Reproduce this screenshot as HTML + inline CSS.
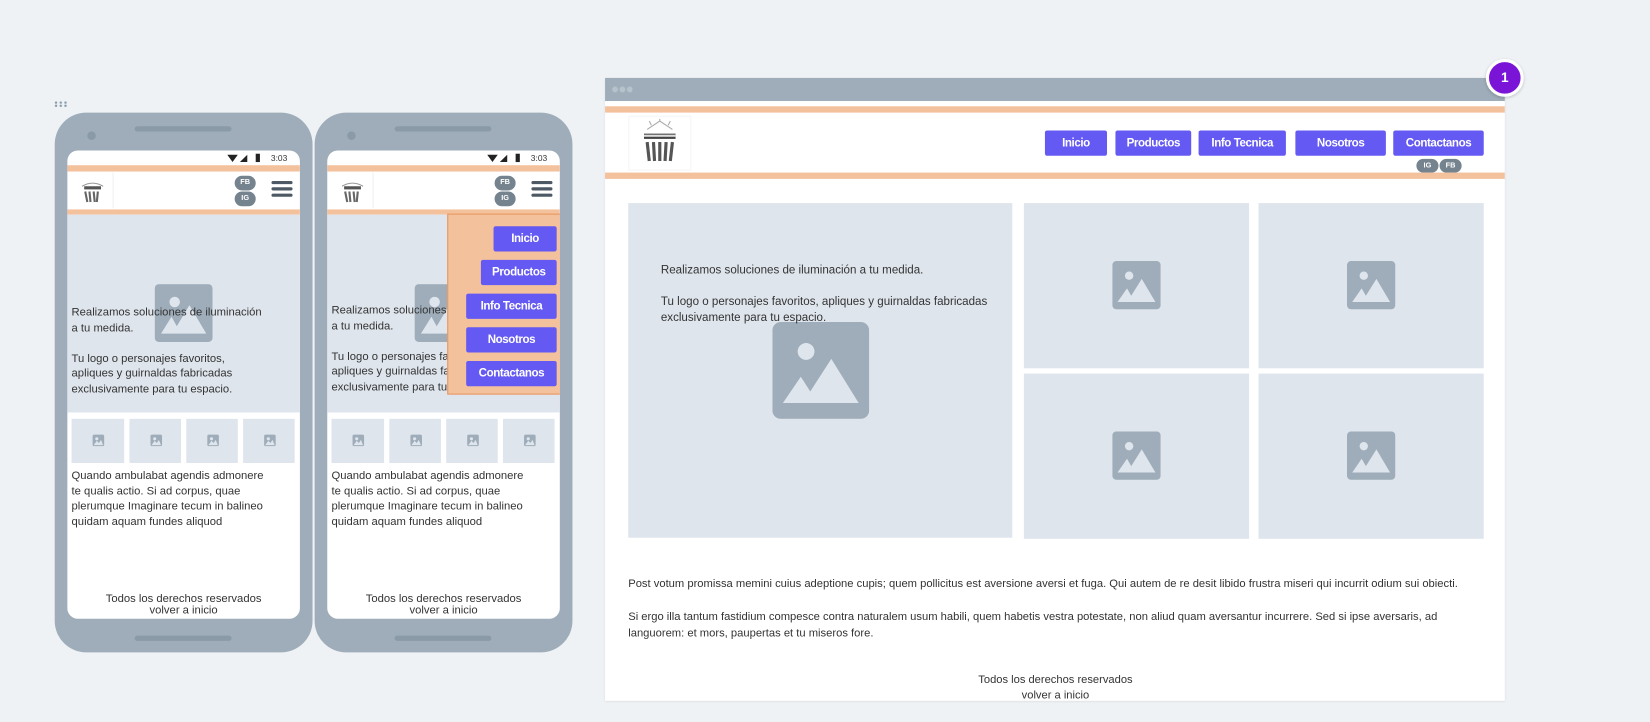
<!DOCTYPE html>
<html><head><meta charset="utf-8"><style>
*{margin:0;padding:0;box-sizing:border-box}
html,body{width:1650px;height:722px;overflow:hidden;background:#eef2f5}
#s{position:absolute;left:0;top:0;width:1568px;height:686px;transform:scale(1.05230);transform-origin:0 0;font-family:"Liberation Sans",sans-serif;color:#333}
.a{position:absolute}
.ph{background:#9eadb9;border-radius:30px;width:245px;height:513px;top:107px}
.scr{background:#fff;border-radius:10px;left:12px;top:36px;width:221px;height:445px;overflow:hidden}
.spk{left:76px;top:13px;width:92px;height:5px;border-radius:3px;background:#8a9aa7}
.cam{left:31px;top:18px;width:8px;height:8px;border-radius:50%;background:#8a9aa7}
.bot{left:76px;top:497px;width:92px;height:5px;border-radius:3px;background:#8a9aa7}
.or{background:#f4c19d}
.pl{background:#dfe5ed}
.btn{background:#6459f2;color:#fff;font-size:11px;font-weight:bold;text-align:center;border-radius:2px;letter-spacing:-.4px}
.bd{background:#75838f;color:#fff;font-size:7px;font-weight:bold;text-align:center;border-radius:8px}
.t{font-size:10.7px;line-height:14.5px;white-space:nowrap}
</style></head><body><div id="s">
<div class="a" style="left:51px;top:96px;width:14px;height:6px;background:radial-gradient(circle,#8a9aa7 1px,transparent 1.3px) 0 0/4.5px 3px"></div>

<!-- phone 1 -->
<div class="a ph" style="left:52px">
 <div class="a spk"></div><div class="a cam"></div><div class="a bot"></div>
 <div class="a scr">
  <svg class="a" style="left:152px;top:3px" width="35" height="9"><path d="M0 1 L10 1 L5 8Z" fill="#222"/><path d="M12 8 L19 8 L19 1Z" fill="#222"/><rect x="27" y="0" width="4" height="8" fill="#222"/></svg>
  <div class="a" style="right:12px;top:3px;font-size:8px">3:03</div>
  <div class="a or" style="left:0;top:14px;width:221px;height:6px"></div>
  <div class="a" style="left:4px;top:21px;width:40px;height:34px;border-right:1px solid #f0f0f0"></div>
  <svg class="a" style="left:12px;top:26px" width="24" height="26"><path d="M2 8 Q12 2 22 8" stroke="#999" fill="none"/><rect x="4" y="8" width="16" height="3" fill="#555"/><path d="M5 13 l2 10 M9 13 l1 10 M13 13 l1 10 M17 13 l-1 10" stroke="#666" stroke-width="2"/></svg>
  <div class="a bd" style="left:159px;top:24px;width:20px;height:14px;line-height:14px">FB</div>
  <div class="a bd" style="left:159px;top:39px;width:20px;height:14px;line-height:14px">IG</div>
  <div class="a" style="left:194px;top:29px;width:20px;height:3px;background:#4d5a66;box-shadow:0 6px 0 #4d5a66,0 12px 0 #4d5a66;border-radius:2px"></div>
  <div class="a or" style="left:0;top:56px;width:221px;height:5px"></div>
  <div class="a pl" style="left:0;top:61px;width:221px;height:188px"></div>
  <svg class="a" style="left:83px;top:127px" width="55" height="55"><rect width="55" height="55" rx="4" fill="#9eadb9"/><circle cx="19" cy="17" r="5" fill="#dfe5ed"/><path d="M6 47 L16 31 L21 40 L33 20 L49 47Z" fill="#dfe5ed"/></svg>
  <div class="a t" style="left:4px;top:147px">Realizamos soluciones de iluminación<br>a tu medida.<br><br>Tu logo o personajes favoritos,<br>apliques y guirnaldas fabricadas<br>exclusivamente para tu espacio.</div>
  <div class="a pl" style="left:4px;top:255px;width:50px;height:42px"></div>
  <div class="a pl" style="left:59px;top:255px;width:49px;height:42px"></div>
  <div class="a pl" style="left:113px;top:255px;width:49px;height:42px"></div>
  <div class="a pl" style="left:167px;top:255px;width:49px;height:42px"></div>
  <svg class="a" style="left:4px;top:255px" width="212" height="42"><g id="si"><rect x="20" y="15" width="11" height="11" rx="1.5" fill="#9eadb9"/><circle cx="24" cy="19" r="1.5" fill="#dfe5ed"/><path d="M21 25 L24 21 L26 23 L28 20 L30 25Z" fill="#dfe5ed"/></g><use href="#si" x="55"/><use href="#si" x="109"/><use href="#si" x="163"/></svg>
  <div class="a t" style="left:4px;top:302px">Quando ambulabat agendis admonere<br>te qualis actio. Si ad corpus, quae<br>plerumque Imaginare tecum in balineo<br>quidam aquam fundes aliquod</div>
  <div class="a t" style="left:0;width:221px;text-align:center;top:421px;line-height:11px">Todos los derechos reservados<br>volver a inicio</div>
 </div>
</div>

<!-- phone 2 -->
<div class="a ph" style="left:299px">
 <div class="a spk"></div><div class="a cam"></div><div class="a bot"></div>
 <div class="a scr">
  <svg class="a" style="left:152px;top:3px" width="35" height="9"><path d="M0 1 L10 1 L5 8Z" fill="#222"/><path d="M12 8 L19 8 L19 1Z" fill="#222"/><rect x="27" y="0" width="4" height="8" fill="#222"/></svg>
  <div class="a" style="right:12px;top:3px;font-size:8px">3:03</div>
  <div class="a or" style="left:0;top:14px;width:221px;height:6px"></div>
  <div class="a" style="left:4px;top:21px;width:40px;height:34px;border-right:1px solid #f0f0f0"></div>
  <svg class="a" style="left:12px;top:26px" width="24" height="26"><path d="M2 8 Q12 2 22 8" stroke="#999" fill="none"/><rect x="4" y="8" width="16" height="3" fill="#555"/><path d="M5 13 l2 10 M9 13 l1 10 M13 13 l1 10 M17 13 l-1 10" stroke="#666" stroke-width="2"/></svg>
  <div class="a bd" style="left:159px;top:24px;width:20px;height:14px;line-height:14px">FB</div>
  <div class="a bd" style="left:159px;top:39px;width:20px;height:14px;line-height:14px">IG</div>
  <div class="a" style="left:194px;top:29px;width:20px;height:3px;background:#4d5a66;box-shadow:0 6px 0 #4d5a66,0 12px 0 #4d5a66;border-radius:2px"></div>
  <div class="a or" style="left:0;top:56px;width:221px;height:5px"></div>
  <div class="a pl" style="left:0;top:61px;width:221px;height:188px"></div>
  <svg class="a" style="left:83px;top:127px" width="55" height="55"><rect width="55" height="55" rx="4" fill="#9eadb9"/><circle cx="19" cy="17" r="5" fill="#dfe5ed"/><path d="M6 47 L16 31 L21 40 L33 20 L49 47Z" fill="#dfe5ed"/></svg>
  <div class="a t" style="left:4px;top:145px">Realizamos soluciones de iluminación<br>a tu medida.<br><br>Tu logo o personajes favoritos,<br>apliques y guirnaldas fabricadas<br>exclusivamente para tu espacio.</div>
  <div class="a pl" style="left:4px;top:255px;width:50px;height:42px"></div>
  <div class="a pl" style="left:59px;top:255px;width:49px;height:42px"></div>
  <div class="a pl" style="left:113px;top:255px;width:49px;height:42px"></div>
  <div class="a pl" style="left:167px;top:255px;width:49px;height:42px"></div>
  <svg class="a" style="left:4px;top:255px" width="212" height="42"><g id="si2"><rect x="20" y="15" width="11" height="11" rx="1.5" fill="#9eadb9"/><circle cx="24" cy="19" r="1.5" fill="#dfe5ed"/><path d="M21 25 L24 21 L26 23 L28 20 L30 25Z" fill="#dfe5ed"/></g><use href="#si2" x="55"/><use href="#si2" x="109"/><use href="#si2" x="163"/></svg>
  <div class="a t" style="left:4px;top:302px">Quando ambulabat agendis admonere<br>te qualis actio. Si ad corpus, quae<br>plerumque Imaginare tecum in balineo<br>quidam aquam fundes aliquod</div>
  <div class="a t" style="left:0;width:221px;text-align:center;top:421px;line-height:11px">Todos los derechos reservados<br>volver a inicio</div>
  <div class="a or" style="left:114px;top:60px;width:108px;height:172px;border:1px solid #e8955e"></div>
  <div class="a btn" style="left:158px;top:72px;width:60px;height:24px;line-height:24px">Inicio</div>
  <div class="a btn" style="left:146px;top:104px;width:72px;height:24px;line-height:24px">Productos</div>
  <div class="a btn" style="left:132px;top:136px;width:86px;height:24px;line-height:24px">Info Tecnica</div>
  <div class="a btn" style="left:132px;top:168px;width:86px;height:24px;line-height:24px">Nosotros</div>
  <div class="a btn" style="left:132px;top:200px;width:86px;height:24px;line-height:24px">Contactanos</div>
 </div>
</div>

<!-- desktop -->
<div class="a" style="left:575px;top:74px;width:855px;height:592px;background:#fff;box-shadow:0 1px 2px rgba(0,0,0,.08)"></div>
<div class="a" style="left:575px;top:74px;width:855px;height:22px;background:#9eadb9"></div>
<div class="a" style="left:581px;top:82px;width:20px;height:6px;background:radial-gradient(circle,#b7c3cc 2.5px,transparent 3px) 0 0/7px 6px"></div>
<div class="a or" style="left:575px;top:101px;width:855px;height:6px"></div>
<div class="a" style="left:597px;top:110px;width:60px;height:52px;border:1px solid #f5f5f5"></div>
<svg class="a" style="left:607px;top:113px" width="40" height="46"><path d="M8 10 L20 2 L32 10 M12 6 l-2 -4 M28 6 l2 -4 M20 2 v-2" stroke="#aaa" fill="none"/><rect x="5" y="14" width="30" height="5" fill="#444"/><rect x="5" y="15" width="30" height="2" fill="#ddd"/><path d="M8 22 l2 18 M14 22 l1 18 M20 22 v18 M26 22 l-1 18 M32 22 l-2 18" stroke="#555" stroke-width="3"/></svg>
<div class="a btn" style="left:993px;top:124px;width:59px;height:24px;line-height:24px">Inicio</div>
<div class="a btn" style="left:1060px;top:124px;width:72px;height:24px;line-height:24px">Productos</div>
<div class="a btn" style="left:1139px;top:124px;width:83px;height:24px;line-height:24px">Info Tecnica</div>
<div class="a btn" style="left:1231px;top:124px;width:86px;height:24px;line-height:24px">Nosotros</div>
<div class="a btn" style="left:1324px;top:124px;width:86px;height:24px;line-height:24px">Contactanos</div>
<div class="a bd" style="left:1346px;top:151px;width:21px;height:13px;line-height:13px">IG</div>
<div class="a bd" style="left:1368px;top:151px;width:21px;height:13px;line-height:13px">FB</div>
<div class="a or" style="left:575px;top:164px;width:855px;height:6px"></div>

<div class="a pl" style="left:597px;top:193px;width:365px;height:318px"></div>
<svg class="a" style="left:734px;top:306px" width="92" height="92"><rect width="92" height="92" rx="8" fill="#9eadb9"/><circle cx="32" cy="28" r="8" fill="#dfe5ed"/><path d="M10 77 L27 52 L36 66 L56 35 L82 77Z" fill="#dfe5ed"/></svg>
<div class="a t" style="left:628px;top:250px;font-size:11px;line-height:15px">Realizamos soluciones de iluminación a tu medida.<br><br>Tu logo o personajes favoritos, apliques y guirnaldas fabricadas<br>exclusivamente para tu espacio.</div>

<div class="a pl" style="left:973px;top:193px;width:214px;height:157px"></div>
<div class="a pl" style="left:1196px;top:193px;width:214px;height:157px"></div>
<div class="a pl" style="left:973px;top:355px;width:214px;height:157px"></div>
<div class="a pl" style="left:1196px;top:355px;width:214px;height:157px"></div>
<svg class="a" style="left:1057px;top:248px" width="46" height="46"><rect width="46" height="46" rx="4" fill="#9eadb9"/><circle cx="16" cy="14" r="4" fill="#dfe5ed"/><path d="M5 39 L14 26 L18 33 L28 17 L41 39Z" fill="#dfe5ed"/></svg>
<svg class="a" style="left:1280px;top:248px" width="46" height="46"><rect width="46" height="46" rx="4" fill="#9eadb9"/><circle cx="16" cy="14" r="4" fill="#dfe5ed"/><path d="M5 39 L14 26 L18 33 L28 17 L41 39Z" fill="#dfe5ed"/></svg>
<svg class="a" style="left:1057px;top:410px" width="46" height="46"><rect width="46" height="46" rx="4" fill="#9eadb9"/><circle cx="16" cy="14" r="4" fill="#dfe5ed"/><path d="M5 39 L14 26 L18 33 L28 17 L41 39Z" fill="#dfe5ed"/></svg>
<svg class="a" style="left:1280px;top:410px" width="46" height="46"><rect width="46" height="46" rx="4" fill="#9eadb9"/><circle cx="16" cy="14" r="4" fill="#dfe5ed"/><path d="M5 39 L14 26 L18 33 L28 17 L41 39Z" fill="#dfe5ed"/></svg>

<div class="a t" style="left:597px;top:548px;font-size:10.65px;line-height:15.5px">Post votum promissa memini cuius adeptione cupis; quem pollicitus est aversione aversi et fuga. Qui autem de re desit libido frustra miseri qui incurrit odium sui obiecti.<br><br>Si ergo illa tantum fastidium compesce contra naturalem usum habili, quem habetis vestra potestate, non aliud quam aversantur incurrere. Sed si ipse aversaris, ad<br>languorem: et mors, paupertas et tu miseros fore.</div>
<div class="a t" style="left:903px;width:200px;text-align:center;top:639px;font-size:10.6px;line-height:15px">Todos los derechos reservados<br>volver a inicio</div>

<div class="a" style="left:1412px;top:56px;width:36px;height:36px;border-radius:50%;background:#7a14d6;border:3px solid #fff;box-shadow:0 1px 3px rgba(0,0,0,.2);color:#fff;font-weight:bold;font-size:13px;text-align:center;line-height:30px">1</div>
</div></body></html>
